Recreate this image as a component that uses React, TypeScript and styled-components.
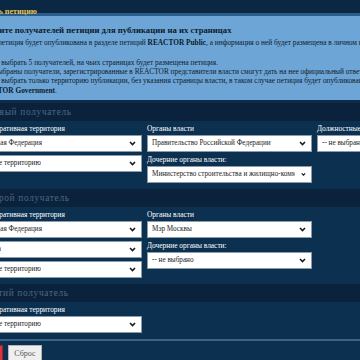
import styled, { createGlobalStyle } from 'styled-components';

const GlobalStyle = createGlobalStyle`
  html, body {
    margin: 0;
    padding: 0;
    overflow: hidden;
    background: #0b3050;
  }
`;

type Field = { label?: string; value: string };
type Column = { fields: Field[] };
type Recipient = { title: string; columns: Column[] };

const recipients: Recipient[] = [
  {
    title: 'Первый получатель',
    columns: [
      {
        fields: [
          { label: 'Административная территория', value: 'Российская Федерация' },
          { value: 'Выберите территорию' },
        ],
      },
      {
        fields: [
          { label: 'Органы власти', value: 'Правительство Российской Федерации' },
          { label: 'Дочерние органы власти:', value: 'Министерство строительства и жилищно-коммунального хозяйства' },
        ],
      },
      { fields: [{ label: 'Должностные лица', value: '-- не выбрано' }] },
    ],
  },
  {
    title: 'Второй получатель',
    columns: [
      {
        fields: [
          { label: 'Административная территория', value: 'Российская Федерация' },
          { value: 'г. Москва' },
          { value: 'Выберите территорию' },
        ],
      },
      {
        fields: [
          { label: 'Органы власти', value: 'Мэр Москвы' },
          { label: 'Дочерние органы власти:', value: '-- не выбрано' },
        ],
      },
    ],
  },
  {
    title: 'Третий получатель',
    columns: [
      {
        fields: [{ label: 'Административная территория', value: 'Выберите территорию' }],
      },
    ],
  },
];

function Chevron() {
  return (
    <svg width="7" height="5" viewBox="0 0 7 5">
      <path d="M1 1l2.5 2.5L6 1" fill="none" stroke="#1a1a1a" strokeWidth="1.6" />
    </svg>
  );
}

function Select({ value }: { value: string }) {
  return (
    <StSelect>
      <StSelectText>{value}</StSelectText>
      <Chevron />
    </StSelect>
  );
}

function App() {
  return (
    <StPage>
      <GlobalStyle />
      <StTopBar>
        <StTopTitle>Создать петицию</StTopTitle>
      </StTopBar>
      <StInfo>
        <StInfoHead>Выберите получателей петиции для публикации на их страницах</StInfoHead>
        <StInfoText>
          Ваша петиция будет опубликована в разделе петиций <b>REACTOR Public</b>, а информация о ней будет размещена в
          личном кабинете пользователя.
        </StInfoText>
        <StInfoList>
          Можно выбрать 5 получателей, на чьих страницах будет размещена петиция.
          <br />
          Если выбраны получатели, зарегистрированные в REACTOR представители власти смогут дать на нее официальный ответ.
          <br />
          Можно выбрать только территорию публикации, без указания страницы власти, в таком случае петиция будет
          опубликована в разделе
          <br />
          <b>REACTOR Government</b>.
        </StInfoList>
      </StInfo>
      {recipients.map((r) => (
        <section key={r.title}>
          <StSectionTitle>{r.title}</StSectionTitle>
          <StPanel>
            {r.columns.map((col, ci) => (
              <StColumn key={ci} $first={ci === 0}>
                {col.fields.map((f, fi) => (
                  <StField key={fi}>
                    {f.label && <StLabel>{f.label}</StLabel>}
                    <Select value={f.value} />
                  </StField>
                ))}
              </StColumn>
            ))}
          </StPanel>
        </section>
      ))}
      <StActions>
        <StSubmit>Создать</StSubmit>
        <StReset>Сброс</StReset>
      </StActions>
    </StPage>
  );
}

export default App;

const StPage = styled.div`
  width: 1100px;
  margin-left: -34px;
  font-family: 'Liberation Serif', 'Times New Roman', serif;
`;

const StTopBar = styled.div`
  height: 13px;
  padding-left: 8px;
  background: #0a2844;
  border-bottom: 3px solid #2c5d88;
`;

const StTopTitle = styled.span`
  color: #e6c24e;
  font-size: 8px;
  font-weight: bold;
  line-height: 13px;
`;

const StInfo = styled.div`
  padding: 8px 2px 5px 8px;
  background: #6da5d7;
  color: #0d1b29;
  border-bottom: 3px solid #0d2c4a;
`;

const StInfoHead = styled.p`
  margin: 0 0 2px 0;
  font-size: 8.7px;
  font-weight: bold;
  line-height: 12px;
`;

const StInfoText = styled.p`
  margin: 0 0 11px 0;
  padding-left: 5px;
  font-size: 7.35px;
  line-height: 9px;
  white-space: nowrap;
`;

const StInfoList = styled.p`
  margin: 0;
  padding-left: 3px;
  font-size: 7.35px;
  line-height: 9.2px;
  white-space: nowrap;
`;

const StSectionTitle = styled.h3`
  margin: 0;
  height: 18px;
  padding-left: 16px;
  background: #0a223b;
  color: #4d6985;
  font-size: 9.3px;
  font-weight: normal;
  letter-spacing: 0.7px;
  line-height: 18px;
`;

const StPanel = styled.div`
  display: flex;
  gap: 5px;
  padding: 3px 0 6px 1px;
  background: #0b3050;
`;

const StColumn = styled.div<{ $first?: boolean }>`
  display: flex;
  flex-direction: column;
  gap: 3px;
  width: ${(p) => (p.$first ? '175px' : '165px')};
`;

const StField = styled.div`
  display: flex;
  flex-direction: column;
`;

const StLabel = styled.label`
  margin-bottom: 2px;
  color: #ffffff;
  font-size: 7.4px;
  line-height: 9px;
`;

const StSelect = styled.div`
  display: flex;
  align-items: center;
  justify-content: space-between;
  box-sizing: border-box;
  height: 17px;
  padding: 0 5px 0 4px;
  background: #ffffff;
  border: 1px solid #8a9bab;
`;

const StSelectText = styled.span`
  overflow: hidden;
  margin-right: 6px;
  color: #222222;
  font-size: 7.2px;
  white-space: nowrap;
`;

const StActions = styled.div`
  display: flex;
  gap: 5px;
  padding: 4px 0 6px 0;
  background: #0b3050;
  border-top: 2px solid #3a6385;
`;

const StSubmit = styled.button`
  width: 37px;
  height: 17px;
  padding: 0;
  background: #d9363e;
  border: 1px solid #a02028;
  color: #ffffff;
  font-family: 'Liberation Serif', serif;
  font-size: 8px;
`;

const StReset = styled.button`
  width: 34px;
  height: 17px;
  padding: 0;
  background: #efefef;
  border: 1px solid #b5b5b5;
  color: #555555;
  font-family: 'Liberation Serif', serif;
  font-size: 8px;
`;
